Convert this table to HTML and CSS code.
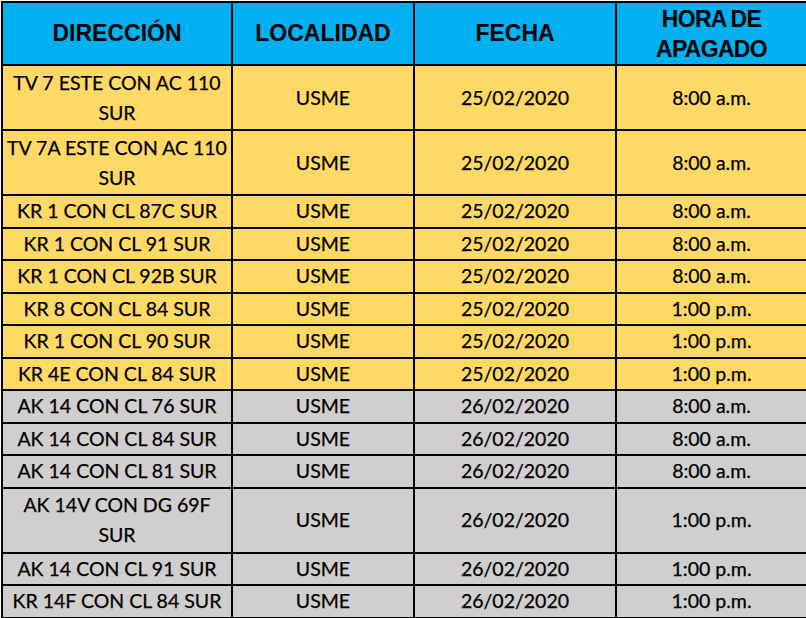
FILE: index.html
```html
<!DOCTYPE html>
<html lang="es">
<head>
<meta charset="utf-8">
<title>Apagados</title>
<link rel="stylesheet" href="styles.css">
</head>
<body>
<table class="sched">
  <colgroup>
    <col class="c-dir">
    <col class="c-loc">
    <col class="c-date">
    <col class="c-time">
  </colgroup>
  <thead>
    <tr class="r-head">
      <th>DIRECCIÓN</th>
      <th>LOCALIDAD</th>
      <th>FECHA</th>
      <th class="two">HORA DE<br>APAGADO</th>
    </tr>
  </thead>
  <tbody>
    <tr class="r-double y"><td>TV 7 ESTE CON AC 110<br>SUR</td><td>USME</td><td>25/02/2020</td><td>8:00 a.m.</td></tr>
    <tr class="r-double y"><td>TV 7A ESTE CON AC 110<br>SUR</td><td>USME</td><td>25/02/2020</td><td>8:00 a.m.</td></tr>
    <tr class="r-single y"><td>KR 1 CON CL 87C SUR</td><td>USME</td><td>25/02/2020</td><td>8:00 a.m.</td></tr>
    <tr class="r-single y"><td>KR 1 CON CL 91 SUR</td><td>USME</td><td>25/02/2020</td><td>8:00 a.m.</td></tr>
    <tr class="r-single y"><td>KR 1 CON CL 92B SUR</td><td>USME</td><td>25/02/2020</td><td>8:00 a.m.</td></tr>
    <tr class="r-single y"><td>KR 8 CON CL 84 SUR</td><td>USME</td><td>25/02/2020</td><td>1:00 p.m.</td></tr>
    <tr class="r-single y"><td>KR 1 CON CL 90 SUR</td><td>USME</td><td>25/02/2020</td><td>1:00 p.m.</td></tr>
    <tr class="r-single y"><td>KR 4E CON CL 84 SUR</td><td>USME</td><td>25/02/2020</td><td>1:00 p.m.</td></tr>
    <tr class="r-single g"><td>AK 14 CON CL 76 SUR</td><td>USME</td><td>26/02/2020</td><td>8:00 a.m.</td></tr>
    <tr class="r-single g"><td>AK 14 CON CL 84 SUR</td><td>USME</td><td>26/02/2020</td><td>8:00 a.m.</td></tr>
    <tr class="r-single g"><td>AK 14 CON CL 81 SUR</td><td>USME</td><td>26/02/2020</td><td>8:00 a.m.</td></tr>
    <tr class="r-double g"><td>AK 14V CON DG 69F<br>SUR</td><td>USME</td><td>26/02/2020</td><td>1:00 p.m.</td></tr>
    <tr class="r-single g"><td>AK 14 CON CL 91 SUR</td><td>USME</td><td>26/02/2020</td><td>1:00 p.m.</td></tr>
    <tr class="r-single g"><td>KR 14F CON CL 84 SUR</td><td>USME</td><td>26/02/2020</td><td>1:00 p.m.</td></tr>
  </tbody>
</table>
</body>
</html>
```

FILE: styles.css
```css
html, body {
  margin: 0;
  padding: 0;
  background: #ffffff;
}

.sched {
  border-collapse: collapse;
  table-layout: fixed;
  width: 805px;
  margin: 1px 0 0 1px;
}

.c-dir { width: 230px; }
.c-loc { width: 182px; }
.c-date { width: 202px; }
.c-time { width: 191px; }

.sched th,
.sched td {
  border: 2px solid #000;
  padding: 0;
  text-align: center;
  vertical-align: middle;
  overflow: hidden;
}

.sched th {
  background: #00b0f0;
  font-family: "Liberation Sans", Arial, sans-serif;
  font-weight: bold;
  font-size: 23px;
  line-height: 31px;
  color: #000;
}

.sched th.two {
  line-height: 30px;
  letter-spacing: -0.7px;
  word-spacing: -1px;
}

.sched td {
  font-family: Lato, "Open Sans", sans-serif;
  font-size: 19.5px;
  line-height: 30px;
  color: #000;
  -webkit-text-stroke: 0.25px #000;
}

.r-head { height: 63px; }
.r-double { height: 65px; }
.r-single { height: 32.5px; }

.y td { background: #ffd966; }
.g td { background: #d0cece; }
```
